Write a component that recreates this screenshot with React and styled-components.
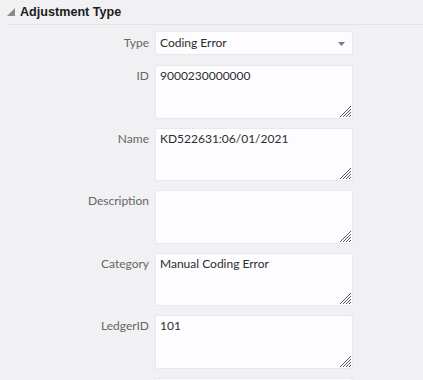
import React from 'react';
import styled, { createGlobalStyle } from 'styled-components';

const GlobalStyle = createGlobalStyle`
  html, body {
    margin: 0;
    padding: 0;
    background: #f1f0f2;
  }
  body {
    font-family: Lato, "Noto Sans", sans-serif;
  }
`;

const Page = styled.div`
  width: 423px;
  height: 380px;
  overflow: hidden;
  background: #f1f0f2;
`;

const Header = styled.div`
  display: flex;
  align-items: center;
  gap: 5px;
  height: 25px;
  margin-left: 7px;
  border-bottom: 1px solid #e3e2e5;
  box-sizing: border-box;
`;

const Title = styled.h2`
  margin: 0;
  font-family: "Liberation Sans", Arial, sans-serif;
  font-size: 12.6px;
  font-weight: bold;
  color: #1c1c1c;
  line-height: 1;
  padding-top: 1px;
`;

const Form = styled.div`
  display: grid;
  grid-template-columns: 149px 198px;
  column-gap: 6px;
  row-gap: 9px;
  padding-top: 6px;
  align-items: start;
`;

const Label = styled.label`
  text-align: right;
  font-size: 12px;
  line-height: 16px;
  color: #666666;
  padding-top: ${p => (p.$select ? 4 : 3)}px;
  margin-top: ${p => (p.$first ? 1 : 0)}px;
`;

const Box = styled.div`
  position: relative;
  box-sizing: border-box;
  height: ${p => (p.$select ? 24 : 53.6)}px;
  background: #fdfcfe;
  border: 1px solid #e9e8eb;
  border-radius: 2px;
  padding: ${p => (p.$select ? '3px 4px' : '2px 4px')};
  font-size: 12px;
  line-height: 16px;
  color: #2d2d2d;
  margin-top: ${p => (p.$first ? 1 : 0)}px;
`;

const Grip = styled.svg`
  position: absolute;
  right: 1px;
  bottom: 1px;
`;

const Caret = styled.svg`
  position: absolute;
  right: 7px;
  top: 10px;
`;

const Toggle = () => (
  <svg width="8" height="8" viewBox="0 0 8 8">
    <polygon points="8,0 8,8 0,8" fill="#8a8a8a" />
  </svg>
);

const ResizeGrip = () => (
  <Grip width="12" height="12" viewBox="0 0 12 12">
    <g stroke="#5a5a5a" strokeWidth="1">
      <line x1="1" y1="12" x2="12" y2="1" />
      <line x1="4" y1="12" x2="12" y2="4" />
      <line x1="7" y1="12" x2="12" y2="7" />
      <line x1="10" y1="12" x2="12" y2="10" />
    </g>
  </Grip>
);

const fields = [
  { label: 'ID', value: '9000230000000' },
  { label: 'Name', value: 'KD522631:06/01/2021' },
  { label: 'Description', value: '' },
  { label: 'Category', value: 'Manual Coding Error' },
  { label: 'LedgerID', value: '101' },
  { label: '', value: '' },
];

const App = () => {
  return (
    <Page>
      <GlobalStyle />
      <Header>
        <Toggle />
        <Title>Adjustment Type</Title>
      </Header>
      <Form>
        <Label $select>Type</Label>
        <Box $select>
          Coding Error
          <Caret width="7" height="4" viewBox="0 0 7 4">
            <polygon points="0,0 7,0 3.5,4" fill="#7a7a7a" />
          </Caret>
        </Box>
        {fields.map((f, i) => (
          <React.Fragment key={i}>
            <Label $first={i === 0}>{f.label}</Label>
            <Box $first={i === 0}>
              {f.value}
              <ResizeGrip />
            </Box>
          </React.Fragment>
        ))}
      </Form>
    </Page>
  );
};

export default App;
